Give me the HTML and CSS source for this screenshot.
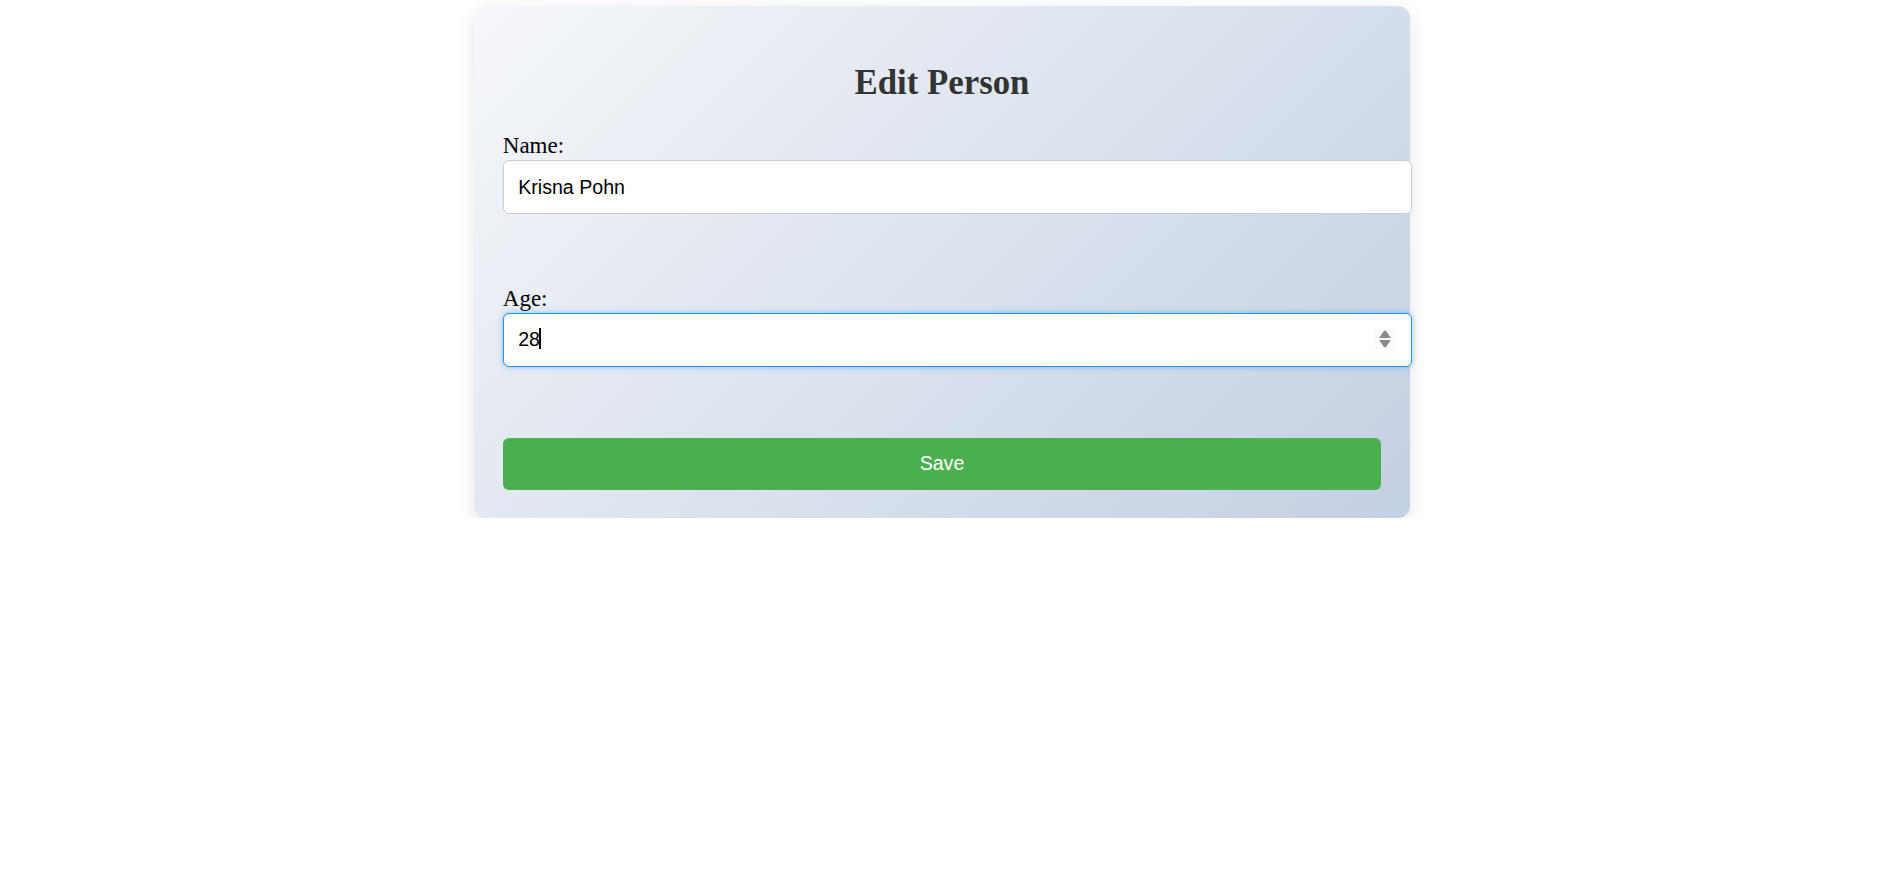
FILE: index.html
```html
<!DOCTYPE html>
<html lang="en">
<head>
<meta charset="utf-8">
<title>Edit Person</title>
<link rel="stylesheet" href="styles.css">
</head>
<body>
<div class="page">
  <form class="card">
    <h2 class="title">Edit Person</h2>
    <div class="group">
      <label class="label" for="name">Name:</label>
      <div class="input-wrap">
        <input class="input" id="name" type="text" value="Krisna Pohn">
      </div>
    </div>
    <div class="group group-last">
      <label class="label" for="age">Age:</label>
      <div class="input-wrap">
        <input class="input input-focused" id="age" type="text" value="28">
        <span class="caret"></span>
        <span class="spinner">
          <svg width="22" height="22" viewBox="0 0 22 22">
            <path d="M11 2.6 Q11.7 2.6 12.2 3.3 L16.4 9.2 Q16.9 10.1 15.8 10.1 L6.2 10.1 Q5.1 10.1 5.6 9.2 L9.8 3.3 Q10.3 2.6 11 2.6 Z" fill="#8a8a8a"/>
            <path d="M11 19.4 Q11.7 19.4 12.2 18.7 L16.4 12.8 Q16.9 11.9 15.8 11.9 L6.2 11.9 Q5.1 11.9 5.6 12.8 L9.8 18.7 Q10.3 19.4 11 19.4 Z" fill="#8a8a8a"/>
          </svg>
        </span>
      </div>
    </div>
    <button class="save" type="button">Save</button>
  </form>
</div>
</body>
</html>
```

FILE: styles.css
```css
html, body {
  margin: 0;
  padding: 0;
  background: #ffffff;
}

.page {
  display: flex;
  justify-content: center;
  padding: 6px 7px 0 0;
}

.card {
  width: 936px;
  box-sizing: border-box;
  padding: 28.8px;
  border-radius: 12px;
  background: linear-gradient(135deg, #f5f7fa 0%, #c3cfe2 100%);
  box-shadow: 0 5px 18px rgba(0, 0, 0, 0.1);
}

.title {
  margin: 28.7px 0 29.8px;
  text-align: center;
  font-family: "Liberation Serif", "Times New Roman", serif;
  font-weight: bold;
  font-size: 34.8px;
  color: #333333;
}

.group {
  margin-bottom: 71.6px;
}

.group-last {
  margin-bottom: 71px;
}

.label {
  display: block;
  font-family: "Liberation Serif", "Times New Roman", serif;
  font-size: 23px;
  color: #000000;
  margin-bottom: 0.6px;
}

.input-wrap {
  position: relative;
  margin-right: -30.8px;
}

.input {
  display: block;
  width: 100%;
  box-sizing: border-box;
  margin: 0;
  padding: 14.8px 14.4px;
  border: 1px solid #cccccc;
  border-radius: 6px;
  background: #ffffff;
  font-family: "Liberation Sans", Arial, sans-serif;
  font-size: 19.6px;
  line-height: normal;
  color: #000000;
  outline: none;
  caret-color: transparent;
}

.input-focused {
  border-color: #1e90ff;
  box-shadow: 0 0 6px rgba(30, 144, 255, 0.45);
}

.caret {
  position: absolute;
  left: 36.6px;
  top: 15.4px;
  width: 2px;
  height: 21px;
  background: #000000;
}

.spinner {
  position: absolute;
  right: 16px;
  top: 15.5px;
  width: 22px;
  height: 22px;
  background: #fbfbfb;
  display: flex;
}

.save {
  display: block;
  width: 100%;
  box-sizing: border-box;
  padding: 14.2px 0;
  border: none;
  border-radius: 6px;
  background: #4caf50;
  color: #ffffff;
  font-family: "Liberation Sans", Arial, sans-serif;
  font-size: 19.6px;
  line-height: normal;
  cursor: pointer;
}
```
